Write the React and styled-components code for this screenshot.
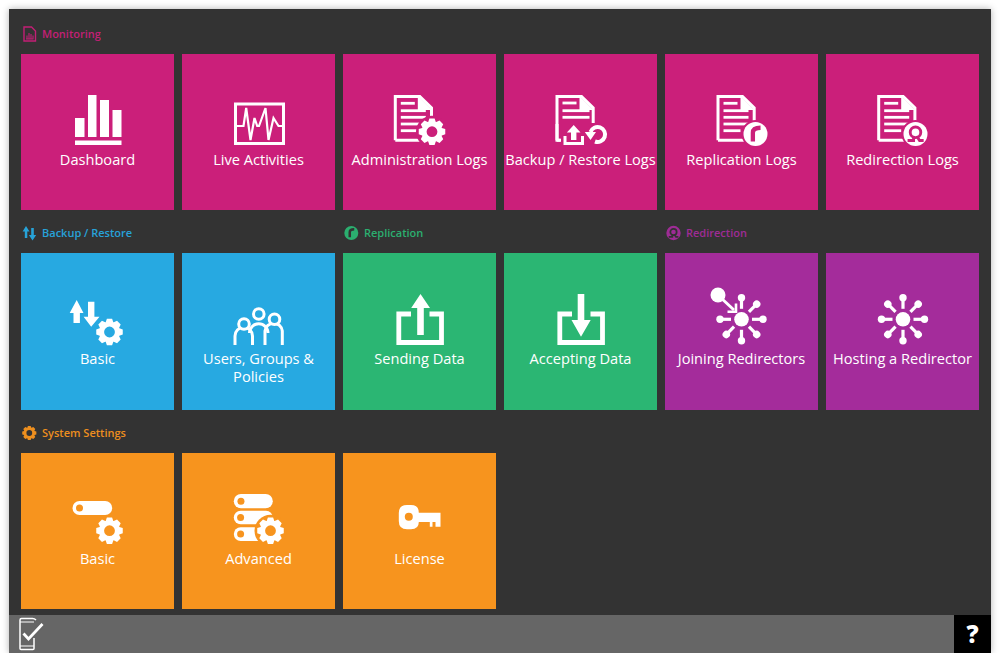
import React from "react";
import styled, { createGlobalStyle } from "styled-components";

const PINK = "#cb1f7a";
const BLUE = "#27a9e1";
const GREEN = "#2bb673";
const PURPLE = "#a42c9b";
const ORANGE = "#f7941e";

const Global = createGlobalStyle`
  html, body { margin: 0; padding: 0; background: #fff; }
  body { font-family: "Open Sans", "Liberation Sans", sans-serif; }
`;

const Win = styled.div`
  width: 982px;
  height: 644px;
  margin: 9px 0 0 9px;
  display: flex;
  flex-direction: column;
  background: #333;
  box-shadow: 0 0 7px rgba(0, 0, 0, 0.3);
`;
const Content = styled.main`
  flex: 1;
  padding: 11.75px 12px 0 12px;
  display: grid;
  grid-template-columns: repeat(6, 153px);
  grid-auto-rows: 189.5px;
  column-gap: 8px;
  row-gap: 10px;
  align-content: start;
`;
const Section = styled.section`
  grid-column: span ${(p) => p.$span};
  display: flex;
  flex-direction: column;
`;
const Heading = styled.h2`
  height: 33px;
  box-sizing: border-box;
  margin: 0;
  padding: 0 0 7px 1px;
  display: flex;
  align-items: center;
  gap: 5px;
  font-size: 11px;
  line-height: 16px;
  font-weight: 600;
  color: ${(p) => p.$color};
  opacity: 0.95;
`;
const Tiles = styled.div`
  flex: 1;
  display: grid;
  grid-template-columns: repeat(${(p) => p.$span}, 153px);
  column-gap: 8px;
`;
const Tile = styled.a`
  background: ${(p) => p.$color};
  color: #fff;
  padding-top: 36px;
  display: flex;
  flex-direction: column;
  align-items: center;
  text-align: center;
`;
const IconBox = styled.svg`
  display: block;
  width: 60px;
  height: 56px;
  flex: none;
  overflow: visible;
`;
const Label = styled.span`
  margin-top: 3.9px;
  font-size: 14.6px;
  line-height: 18px;
  color: #fff;
  white-space: pre;
`;
const Footer = styled.footer`
  height: 38px;
  flex: none;
  background: #666;
  display: flex;
  align-items: center;
  justify-content: space-between;
  padding-left: 10px;
`;
const Help = styled.button`
  width: 37px;
  height: 38px;
  border: 0;
  padding: 0;
  background: #000;
  color: #fff;
  font-family: "Open Sans", "Liberation Sans", sans-serif;
  font-weight: 800;
  font-size: 24px;
  line-height: 38px;
`;

function gearPath(cx, cy, r, hole) {
  const teeth = 8;
  const root = r * 0.78;
  let d = "";
  for (let i = 0; i < teeth; i++) {
    const a = (i * 2 * Math.PI) / teeth;
    const w = 0.27;
    const pts = [
      [root, a - w - 0.1],
      [r, a - w * 0.72],
      [r, a + w * 0.72],
      [root, a + w + 0.1],
    ];
    pts.forEach(([rad, an], j) => {
      const x = (cx + rad * Math.sin(an)).toFixed(2);
      const y = (cy - rad * Math.cos(an)).toFixed(2);
      d += (i === 0 && j === 0 ? "M" : "L") + x + " " + y + " ";
    });
  }
  d += "Z ";
  d += `M${cx + hole} ${cy} A${hole} ${hole} 0 1 0 ${cx - hole} ${cy} A${hole} ${hole} 0 1 0 ${cx + hole} ${cy} Z`;
  return d;
}

const Gear = ({ cx, cy, r, fill = "#fff", ring }) => (
  <>
    {ring && <circle cx={cx} cy={cy} r={r + 2.5} fill={ring} />}
    <path d={gearPath(cx, cy, r, r * 0.4)} fill={fill} fillRule="evenodd" />
  </>
);

const Doc = ({ x, rows = [13.3, 20.7, 27.3, 34, 40.7] }) => (
  <>
    <path
      d={`M${x + 1.5} 50.2 V6.5 H${x + 26} L${x + 37.7} 18 V50.2 H${x + 1.5}`}
      fill="none"
      stroke="#fff"
      strokeWidth="3"
    />
    <path d={`M${x + 24} 6 V20 H${x + 38} Z`} fill="#fff" />
    {rows.map((y, i) => (
      <rect
        key={y}
        x={x + 7}
        y={y - 1.4}
        width={i === 0 ? 14 : i === rows.length - 1 ? (rows.length === 3 ? 27 : 17) : rows.length === 3 ? 27 : 25}
        height="2.8"
        fill="#fff"
      />
    ))}
  </>
);

const DashboardIcon = () => (
  <IconBox viewBox="0 0 60 56">
    <g fill="#fff">
      <rect x="7" y="28" width="9.5" height="19" />
      <rect x="20" y="5" width="8.5" height="42" />
      <rect x="32" y="10" width="9" height="37" />
      <rect x="44.5" y="20" width="9" height="27" />
      <rect x="7" y="50.5" width="46.5" height="4.5" />
    </g>
  </IconBox>
);

const LiveIcon = () => (
  <IconBox viewBox="0 0 60 56">
    <rect x="6.5" y="14" width="48" height="39.5" fill="none" stroke="#fff" strokeWidth="3" />
    <path
      d="M6 36 H14.5 L17.2 18 L21.5 50 L25.5 28 L28.2 36 L30 36 L36.5 18 L39.5 50 L44.5 28 L49.5 36 H55"
      fill="none"
      stroke="#fff"
      strokeWidth="2.2"
      strokeLinejoin="miter"
    />
  </IconBox>
);

const AdminLogsIcon = ({ bg }) => (
  <IconBox viewBox="0 0 60 56">
    <Doc x={3.8} />
    <Gear cx={42} cy={41.7} r={13.5} ring={bg} />
  </IconBox>
);

const BackupLogsIcon = ({ bg }) => (
  <IconBox viewBox="0 0 60 56">
    <Doc x={4.5} rows={[13, 20.7, 27.3]} />
    <rect x="10" y="33" width="46" height="24" fill={bg} />
    <path d="M6 34 V50.3 H9.5" fill="none" stroke="#fff" strokeWidth="3" />
    <path d="M14 46 V53.5 H31.5 V46" fill="none" stroke="#fff" strokeWidth="3" />
    <path d="M22.7 35 L29.5 42.5 H25.4 V50 H20 V42.5 H15.9 Z" fill="#fff" />
    <path d="M39.5 42 A7.5 7.5 0 1 1 44 51.5" fill="none" stroke="#fff" strokeWidth="4" />
    <path d="M33.8 42 H45 L39.5 50 Z" fill="#fff" />
  </IconBox>
);

const ReplicationMark = ({ cx, cy, r, fg, bg }) => (
  <>
    <circle cx={cx} cy={cy} r={r} fill={fg} />
    <path
      d={`M${cx - r * 0.22} ${cy + r * 0.62} V${cy - r * 0.1} Q${cx - r * 0.22} ${cy - r * 0.52} ${cx + r * 0.42} ${cy - r * 0.52}`}
      fill="none"
      stroke={bg}
      strokeWidth={r * 0.36}
    />
  </>
);

const RedirectionMark = ({ cx, cy, r, fg, bg }) => (
  <>
    <circle cx={cx} cy={cy} r={r} fill={fg} />
    <circle cx={cx} cy={cy - r * 0.14} r={r * 0.44} fill="none" stroke={bg} strokeWidth={r * 0.24} />
    <path
      d={`M${cx - r * 0.66} ${cy + r * 0.54} H${cx - r * 0.16} V${cy + r * 0.2} M${cx + r * 0.14} ${cy + r * 0.22} L${cx + r * 0.34} ${cy + r * 0.54} H${cx + r * 0.68}`}
      fill="none"
      stroke={bg}
      strokeWidth={r * 0.24}
    />
  </>
);

const ReplicationLogsIcon = ({ bg }) => (
  <IconBox viewBox="0 0 60 56">
    <Doc x={4.5} />
    <circle cx="43.5" cy="44" r="14" fill={bg} />
    <ReplicationMark cx={43.5} cy={44} r={12} fg="#fff" bg={bg} />
  </IconBox>
);

const RedirectionLogsIcon = ({ bg }) => (
  <IconBox viewBox="0 0 60 56">
    <Doc x={4.2} />
    <circle cx="42.5" cy="44" r="14" fill={bg} />
    <RedirectionMark cx={42.5} cy={44} r={12} fg="#fff" bg={bg} />
  </IconBox>
);

const ArrowsGearIcon = () => (
  <IconBox viewBox="0 0 60 56">
    <path d="M8.7 11 L15.5 24 H11.9 V34 H5.5 V24 H1.7 Z" fill="#fff" />
    <path d="M20 12.7 H26.4 V27.7 H31.5 L23.2 37.7 L15.6 27.7 H20 Z" fill="#fff" />
    <Gear cx={41.5} cy={43} r={13.5} />
  </IconBox>
);

const UsersIcon = ({ bg }) => (
  <IconBox viewBox="0 0 60 56">
    <g fill="none" stroke="#fff" strokeWidth="3">
      <path d="M6 56 V47 A8.7 8.7 0 0 1 23.5 47 V56" />
      <path d="M36 56 V42 A8.7 8.7 0 0 1 53.3 42 V56" />
      <path d="M20.5 44 A9 9 0 0 1 39 44" />
      <circle cx="15" cy="35" r="5.3" fill={bg} />
      <circle cx="45.5" cy="30.3" r="5.3" fill={bg} />
      <circle cx="29.8" cy="25" r="5.3" fill={bg} />
    </g>
  </IconBox>
);

const Tray = () => (
  <path d="M21 25 H8.8 V53.5 H51.5 V25 H39.5" fill="none" stroke="#fff" strokeWidth="4.8" />
);

const SendIcon = () => (
  <IconBox viewBox="0 0 60 56">
    <Tray />
    <path d="M30.5 5 L40 19 H33.8 V46 H27.2 V19 H21.2 Z" fill="#fff" />
  </IconBox>
);

const ReceiveIcon = () => (
  <IconBox viewBox="0 0 60 56">
    <Tray />
    <path d="M26.7 5 H33.3 V31 H39.7 L30 47.7 L20.5 31 H26.7 Z" fill="#fff" />
  </IconBox>
);

const spokeAngles = [0, 45, 90, 135, 180, 225, 270, 315];

const Hub = ({ skip = [], cx = 30, cy = 30.3 }) => (
  <>
    <circle cx={cx} cy={cy} r="7.3" fill="#fff" />
    {spokeAngles
      .filter((a) => !skip.includes(a))
      .map((a) => (
        <g key={a} transform={`rotate(${a} ${cx} ${cy})`}>
          <rect x={cx - 1.6} y={cy - 21} width="3.2" height="10.5" fill="#fff" />
          <circle cx={cx} cy={cy - 21.5} r="3.7" fill="#fff" />
        </g>
      ))}
  </>
);

const JoinIcon = () => (
  <IconBox viewBox="0 0 60 56">
    <Hub skip={[315]} cx={29.5} />
    <circle cx="6" cy="6" r="7.5" fill="#fff" />
    <path d="M8 8 L22 21" stroke="#fff" strokeWidth="3" fill="none" />
    <path d="M15.5 22.8 H24 V14.5" stroke="#fff" strokeWidth="2.6" fill="none" />
  </IconBox>
);

const HostIcon = () => (
  <IconBox viewBox="0 0 60 56">
    <Hub />
  </IconBox>
);

const Pill = ({ x, y, w, h, bg }) => (
  <>
    <rect x={x} y={y} width={w} height={h} rx={h / 2} fill="#fff" />
    <circle cx={x + h / 2} cy={y + h / 2} r={3.5} fill={bg} />
  </>
);

const SwitchGearIcon = ({ bg }) => (
  <IconBox viewBox="0 0 60 56">
    <Pill x={4.5} y={12} w={39.7} h={14} bg={bg} />
    <Gear cx={41.5} cy={41.7} r={13.5} />
  </IconBox>
);

const AdvancedIcon = ({ bg }) => (
  <IconBox viewBox="0 0 60 56">
    <Pill x={4.8} y={5} w={39} h={14.3} bg={bg} />
    <Pill x={4.8} y={21.7} w={39} h={13.6} bg={bg} />
    <Pill x={4.8} y={38.3} w={39} h={13.6} bg={bg} />
    <Gear cx={41.5} cy={41.7} r={13.5} ring={bg} />
  </IconBox>
);

const KeyIcon = ({ bg }) => (
  <IconBox viewBox="0 0 60 56">
    <path
      d="M17 16 H21 Q28.8 16 28.8 23.7 H50.5 V37.7 H45.5 V33 H42.5 V37.7 H39.8 V33 H28.8 Q28.8 40.3 21 40.3 H17 Q8.8 40.3 8.8 32 V24 Q8.8 16 17 16 Z"
      fill="#fff"
    />
    <circle cx="18.8" cy="27.7" r="4" fill={bg} />
  </IconBox>
);

const SmallSvg = styled.svg`
  display: block;
  width: 15px;
  height: 16px;
  flex: none;
`;

const MonitorGlyph = ({ color }) => (
  <SmallSvg viewBox="0 0 15 16">
    <path d="M2 15 V1 H9.5 L13.5 5 V15 Z" fill="none" stroke={color} strokeWidth="1.4" />
    <path d="M4 13 H11.5 M5 13 V9.5 M7 13 V7 M9 13 V8 M11 13 V9.5" fill="none" stroke={color} strokeWidth="1.1" />
  </SmallSvg>
);

const ArrowsGlyph = ({ color }) => (
  <SmallSvg viewBox="0 0 15 16">
    <path d="M4 1 L7.5 6.5 H5.3 V13 H2.8 V6.5 H0.6 Z" fill={color} />
    <path d="M9.2 3 H11.8 V10 H14.2 L10.5 15.5 L6.9 10 H9.2 Z" fill={color} />
  </SmallSvg>
);

const ReplGlyph = ({ color }) => (
  <SmallSvg viewBox="0 0 15 16">
    <ReplicationMark cx={7.3} cy={8} r={7} fg={color} bg="#333" />
  </SmallSvg>
);

const RediGlyph = ({ color }) => (
  <SmallSvg viewBox="0 0 15 16">
    <RedirectionMark cx={7.5} cy={8} r={7.2} fg={color} bg="#333" />
  </SmallSvg>
);

const GearGlyph = ({ color }) => (
  <SmallSvg viewBox="0 0 15 16">
    <Gear cx={7.3} cy={8} r={7.2} fill={color} />
  </SmallSvg>
);

const FooterSvg = styled.svg`
  display: block;
  width: 26px;
  height: 34px;
`;

const PhoneCheck = () => (
  <FooterSvg viewBox="0 0 26 34">
    <path d="M15 21 V31.5 Q15 32.5 14 32.5 H2 Q1 32.5 1 31.5 V3 Q1 1.5 2.5 1.5 H13.5 Q15.5 1.5 17 3" fill="none" stroke="#fff" strokeWidth="1.5" />
    <path d="M1 5 H15 M1 29 H15" fill="none" stroke="#fff" strokeWidth="1" />
    <path d="M4.5 16.5 L9.5 22 L23.5 7" fill="none" stroke="#666" strokeWidth="5.5" />
    <path d="M4.5 16.5 L9.5 22 L23.5 7" fill="none" stroke="#fff" strokeWidth="2.8" />
  </FooterSvg>
);

const sections = [
  {
    span: 6,
    title: "Monitoring",
    color: PINK,
    Glyph: MonitorGlyph,
    tiles: [
      ["Dashboard", DashboardIcon],
      ["Live Activities", LiveIcon],
      ["Administration Logs", AdminLogsIcon],
      ["Backup / Restore Logs", BackupLogsIcon],
      ["Replication Logs", ReplicationLogsIcon],
      ["Redirection Logs", RedirectionLogsIcon],
    ],
  },
  {
    span: 2,
    title: "Backup / Restore",
    color: BLUE,
    Glyph: ArrowsGlyph,
    tiles: [
      ["Basic", ArrowsGearIcon],
      ["Users, Groups &\nPolicies", UsersIcon],
    ],
  },
  {
    span: 2,
    title: "Replication",
    color: GREEN,
    Glyph: ReplGlyph,
    tiles: [
      ["Sending Data", SendIcon],
      ["Accepting Data", ReceiveIcon],
    ],
  },
  {
    span: 2,
    title: "Redirection",
    color: PURPLE,
    Glyph: RediGlyph,
    tiles: [
      ["Joining Redirectors", JoinIcon],
      ["Hosting a Redirector", HostIcon],
    ],
  },
  {
    span: 3,
    title: "System Settings",
    color: ORANGE,
    Glyph: GearGlyph,
    tiles: [
      ["Basic", SwitchGearIcon],
      ["Advanced", AdvancedIcon],
      ["License", KeyIcon],
    ],
  },
];

export default function App() {
  return (
    <>
      <Global />
      <Win>
        <Content>
          {sections.map(({ span, title, color, Glyph, tiles }) => (
            <Section key={title} $span={span}>
              <Heading $color={color}>
                <Glyph color={color} />
                {title}
              </Heading>
              <Tiles $span={span}>
                {tiles.map(([label, Icon]) => (
                  <Tile key={label} $color={color}>
                    <Icon bg={color} />
                    <Label>{label}</Label>
                  </Tile>
                ))}
              </Tiles>
            </Section>
          ))}
        </Content>
        <Footer>
          <PhoneCheck />
          <Help>?</Help>
        </Footer>
      </Win>
    </>
  );
}
